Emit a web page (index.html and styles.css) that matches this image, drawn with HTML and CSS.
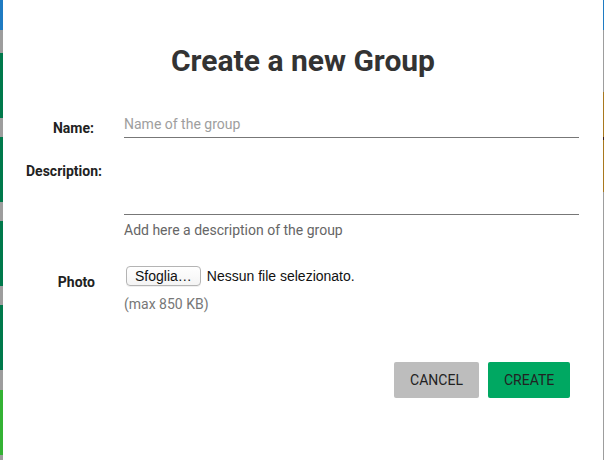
FILE: index.html
```html
<!DOCTYPE html>
<html lang="en">
<head>
<meta charset="utf-8">
<title>Create a new Group</title>
<link rel="stylesheet" href="styles.css">
</head>
<body>
<div class="page">
  <div class="edge edge-left">
    <span class="seg seg-blue s30"></span>
    <span class="seg seg-gray s23"></span>
    <span class="seg seg-green s65"></span>
    <span class="seg seg-gray s19"></span>
    <span class="seg seg-green s65"></span>
    <span class="seg seg-gray s19"></span>
    <span class="seg seg-green s65"></span>
    <span class="seg seg-gray s19"></span>
    <span class="seg seg-green s65"></span>
    <span class="seg seg-gray s20"></span>
    <span class="seg seg-lime s65"></span>
    <span class="seg seg-gray s5"></span>
  </div>

  <div class="modal">
    <h1 class="title">Create a new Group</h1>

    <form class="form">
      <div class="row row-name">
        <label class="label" for="name">Name:</label>
        <div class="field">
          <input id="name" class="input" type="text" placeholder="Name of the group">
        </div>
      </div>

      <div class="row row-desc">
        <label class="label label-wide" for="desc">Description:</label>
        <div class="field">
          <textarea id="desc" class="textarea"></textarea>
          <div class="hint hint-dark">Add here a description of the group</div>
        </div>
      </div>

      <div class="row row-photo">
        <label class="label label-photo">Photo</label>
        <div class="field">
          <div class="file">
            <span class="file-btn">Sfoglia…</span>
            <span class="file-name">Nessun file selezionato.</span>
          </div>
          <div class="hint hint-max">(max 850 KB)</div>
        </div>
      </div>

      <div class="actions">
        <button type="button" class="btn btn-cancel">CANCEL</button>
        <button type="button" class="btn btn-create">CREATE</button>
      </div>
    </form>
  </div>

  <div class="edge edge-right">
    <span class="seg seg-blue s30"></span>
    <span class="seg seg-gray s62"></span>
    <span class="seg seg-brown s45"></span>
    <span class="seg seg-dark s3"></span>
    <span class="seg seg-brown s52"></span>
    <span class="seg seg-gray s268"></span>
  </div>
</div>
</body>
</html>
```

FILE: styles.css
```css
* { box-sizing: border-box; }

html, body {
  margin: 0;
  padding: 0;
  height: 100%;
  background: #fff;
}

body {
  font-family: Roboto, "Liberation Sans", sans-serif;
  color: #222;
}

.page {
  display: flex;
  width: 604px;
  height: 460px;
  overflow: hidden;
}

.edge {
  display: flex;
  flex-direction: column;
  flex: none;
}
.edge-left { width: 3px; }
.edge-right { width: 1px; }

.seg { display: block; flex: none; }
.seg-blue { background: #1f7bc2; }
.seg-gray { background: #9d9d9d; }
.seg-green { background: #00794b; }
.seg-lime { background: #34b234; }
.seg-brown { background: #a8781e; }
.seg-dark { background: #3a1a10; }

.s3 { height: 3px; }
.s5 { height: 5px; }
.s19 { height: 19px; }
.s20 { height: 20px; }
.s23 { height: 23px; }
.s30 { height: 30px; }
.s45 { height: 45px; }
.s52 { height: 52px; }
.s62 { height: 62px; }
.s65 { height: 65px; }
.s268 { height: 268px; }

.modal {
  flex: 1;
  background: #fff;
}

.title {
  margin: 0;
  padding-top: 45px;
  text-align: center;
  font-size: 30px;
  line-height: 32px;
  font-weight: 700;
  color: #333;
}

.form {
  margin: 0;
}

.row {
  display: grid;
  grid-template-columns: 121px 1fr;
  padding-right: 24px;
}

.row-name { margin-top: 34px; }
.row-desc { margin-top: 13px; }
.row-photo { margin-top: 28px; }

.label {
  display: block;
  text-align: right;
  padding-right: 30px;
  font-size: 14px;
  line-height: 16px;
  font-weight: 700;
  color: #222;
}

.row-name .label { padding-top: 9px; }
.label-wide { padding-top: 12px; padding-right: 22px; }
.label-photo { padding-top: 8px; padding-right: 29px; }

.field { min-width: 0; }

.input {
  display: block;
  width: 100%;
  height: 27px;
  margin: 0;
  padding: 0;
  border: none;
  border-bottom: 1px solid #777;
  outline: none;
  background: transparent;
  font-family: Roboto, sans-serif;
  font-size: 14px;
  color: #333;
}
.input::placeholder { color: #9e9e9e; opacity: 1; }

.textarea {
  display: block;
  width: 100%;
  height: 64px;
  margin: 0;
  padding: 0;
  border: none;
  border-bottom: 1px solid #777;
  outline: none;
  resize: none;
  background: transparent;
  font-family: Roboto, sans-serif;
  font-size: 14px;
}

.hint {
  font-size: 14px;
  line-height: 16px;
}
.hint-dark { margin-top: 7px; color: #666; }
.hint-max { margin-top: 10px; color: #777; }

.file {
  display: flex;
  align-items: center;
  gap: 6px;
  padding-left: 2px;
  font-family: "Liberation Sans", Arial, sans-serif;
  font-size: 14px;
  color: #111;
}

.file-btn {
  display: block;
  height: 20px;
  padding: 0 8px;
  border: 1px solid #b4b4b4;
  border-radius: 4px;
  background: linear-gradient(#ffffff, #f4f4f4);
  box-shadow: 0 1px 0 rgba(0, 0, 0, 0.06);
  line-height: 18px;
  color: #111;
}

.file-name { line-height: 18px; }

.actions {
  display: flex;
  justify-content: flex-end;
  gap: 9px;
  margin-top: 50px;
  padding-right: 33px;
}

.btn {
  height: 36px;
  padding: 0 16px;
  border: none;
  border-radius: 2px;
  font-family: Roboto, sans-serif;
  font-size: 14px;
  line-height: 36px;
  color: #222;
}
.btn-cancel { background: #bdbdbd; width: 85px; }
.btn-create { background: #00a862; width: 82px; }
```
